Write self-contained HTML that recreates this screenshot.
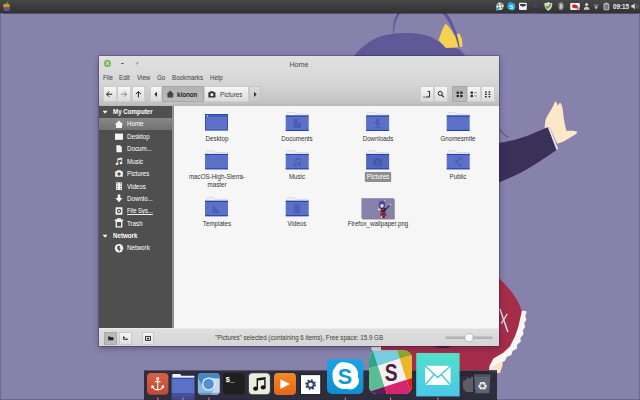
<!DOCTYPE html>
<html><head><meta charset="utf-8"><title>Home</title>
<style>
*{box-sizing:border-box;margin:0;padding:0}
html,body{width:640px;height:400px;overflow:hidden;background:#8782ab}
body{position:relative;font-family:"Liberation Sans",sans-serif;font-size:6.3px;color:#3a3a3a}
.abs{position:absolute}
#wall{position:absolute;left:0;top:0}
#panel{position:absolute;left:0;top:0;width:640px;height:13.4px;background:linear-gradient(#474747 0,#3b3b3b 55%,#313131 100%);box-shadow:0 .5px 1px rgba(30,25,50,.5)}
#win{position:absolute;left:99px;top:56px;width:400px;height:290px;background:linear-gradient(#e0e0e0 0,#d9d9d9 20px,#cfcfcf 36px,#bfbfbf 49px,#d3d3d3 49.5px,#d3d3d3 100%);box-shadow:0 2px 6px 0 rgba(30,20,60,.42),0 0 0 .6px rgba(50,45,80,.55)}
#title{position:absolute;left:0;top:3.8px;width:400px;text-align:center;font-size:7.2px;color:#4a4a4a;line-height:9px}
.menu{position:absolute;top:16.6px;line-height:9px;font-size:6.6px;color:#3c3c46;transform:scaleX(.94);transform-origin:0 50%}
.t{transform:scaleX(.94);transform-origin:0 50%;font-size:6.6px!important}
.tb{position:absolute;top:30.4px;height:16px;background:linear-gradient(#f7f7f7,#dbdbdb);border:.5px solid #cecece}
.tb.on{background:linear-gradient(#b2b2b2,#bcbcbc);border-color:#a8a8a8}
#side{position:absolute;left:0;top:49px;width:73.4px;height:223px;background:#4f4f4f;color:#fff}
.sr{position:absolute;left:27.6px;height:12.4px;line-height:12.4px;font-size:6.6px;white-space:nowrap;transform:scaleX(.94);transform-origin:0 50%}
.sh{position:absolute;left:13.6px;height:12.4px;line-height:12.4px;font-size:6.6px;font-weight:bold;white-space:nowrap;transform:scaleX(.94);transform-origin:0 50%}
#content{position:absolute;left:74px;top:49px;width:326px;height:223px;background:#f6f6f6}
.lbl{position:absolute;width:80px;text-align:center;font-size:6.6px;line-height:8.6px;color:#333;transform:scaleX(.94);transform-origin:50% 50%}
#status{position:absolute;left:0;top:272px;width:400px;height:18px;background:linear-gradient(#dfdfdf,#d5d5d5);border-top:.6px solid #ececec}
#dock{position:absolute;left:144px;top:370px;width:353px;height:30px;background:rgba(36,35,50,.9);border-top:.6px solid rgba(90,88,115,.8)}
</style></head><body>
<svg id="wall" width="640" height="400" viewBox="0 0 640 400">
<rect width="640" height="400" fill="#8782ab"/>
<!-- hair -->
<path d="M349 62 L354 55.800 C358 50.500 363 46 369 41.900 C374 38.700 380 36.300 384.700 35.200 C392 33.600 400 33 408 33 C416 33 425 34.800 431.600 37.200 C437 39.600 442 44 445.600 47.500 L458 48.600 C461 50.500 463.500 53.500 465.400 56.200 L468 80 L349 80Z" fill="#5f5998"/>
<path d="M393.500 34 C392.200 25 394.200 16 400.400 9.500 L402.800 10.500 C396.600 16.500 393.800 25 394.300 34Z" fill="#5f5998"/>
<!-- ribbon -->
<path d="M445.600 23.700 C442.600 28 440.400 34 438.600 40.300 L446 47.900 L462.400 46.900 C462.600 43 462.400 38 459.200 33.500 L453.800 34.900 C452.500 31 449.500 27 445.600 23.700Z" fill="#f6d253"/>
<path d="M438.600 9.800 C447 16.500 455 31 458.500 47.500 L459.700 47.300 C457.200 30 450.200 14.500 441.200 7.500Z" fill="#5f5998"/>
<!-- arm -->
<path d="M496 143.5 C505 142 512 140.6 520 138.2 C526 136.4 531 134.4 535 132.5 C540 130.4 544 128.8 548 127.4 L556.6 150 C550 154.6 544 158.6 538 162.5 C531 167 526 170 520 173 C512 177 505 180 496 183.5Z" fill="#3b3058"/>
<path d="M548 127.4 L549.6 126.8 L558.2 149 L556.6 150Z" fill="#e9e4ee"/>
<path d="M544.6 128 C545 123 545.5 118.5 547 116.5 C550 112 553 107 555.2 101.6 C556.5 101.5 557.2 103.5 557.5 106 C558.5 104 559.5 102.8 560.7 103.2 C562.5 106 563 110 563.2 114 C564 120 565 126 566.5 130.8 C570 131 574 130.5 577 131.8 C577.5 133.5 575 135 572 136.5 C568 139 565 141 561.5 142.2 L557.2 143.8 L549.6 126.8Z" fill="#fce8c9"/>
<path d="M498.5 127 C500.5 131.5 504 135 508.5 137.4" fill="none" stroke="#5f5998" stroke-width="1.3"/>
<!-- skirt -->
<path d="M380.500 345 L380.500 352 L400 376 L488.500 376 L489.500 366 L493.500 358.600 L503 353 L510 346.500 L515.400 335.600 L518.600 326 L522 311.500 C518.600 300 510 288 497 276.400 L490 276 L490 345Z" fill="#a62d49"/>
<path d="M371 347 L381 346.500 L381 350.800 L372 350.500Z" fill="#efeaea"/>
<path d="M522 310.400 L526.800 311.600 L525.200 316 L526.400 319.400 L524.200 323.200 L525.200 326.800 L522.800 330.400 L523.600 334 L520.400 338 L520.900 341.400 L517 344.800 L517 348.400 L512.600 351 L511.400 355 L506.800 357 L505 360.800 L501.200 363 L499.400 367 L497.600 371.600 L489 371.600 L489.500 366 L493.500 358.600 L503 353 L510 346.500 L515.400 335.600 L518.600 326Z" fill="#f9f5f3"/>
<path d="M493 366.500 L497.500 363.400 L501.500 362 L503 364 L500 373 L491.500 373Z" fill="#fbe3c4"/>
<path d="M499.800 308.800 L507.900 332" stroke="#d9e6ec" stroke-width="1.400" fill="none"/>
<path d="M507.200 314 L501.300 323.600" stroke="#d9e6ec" stroke-width="1.300" fill="none"/>
<ellipse cx="442.500" cy="346" rx="8.500" ry="1.700" fill="#2a1d3a"/>

</svg>
<div id="frame" class="abs" style="left:0;top:0;width:640px;height:400px;border:solid rgba(45,40,85,.28);border-width:0 1px 1px 1px"></div>
<div id="panel"><svg class="abs" style="left:0;top:0" width="640" height="13" viewBox="0 0 640 13">
<defs><clipPath id="ap"><path d="M6.6 4 C5.6 3.2 3.4 3.4 3.2 6 C3 8.4 4.4 10.8 5.6 10.8 C6.2 10.8 6.4 10.5 6.9 10.5 C7.4 10.5 7.6 10.8 8.2 10.8 C9.2 10.8 10.2 9 10.3 8.2 C9.2 7.8 8.9 6 10 5.2 C9.4 4 7.8 3.4 6.6 4Z M6.6 3.8 C6.5 2.8 7.4 1.8 8.4 1.7 C8.5 2.8 7.6 3.8 6.6 3.8Z"/></clipPath></defs>
<g clip-path="url(#ap)">
<rect x="2" y="1" width="10" height="4.4" fill="#63b846"/>
<rect x="2" y="5.2" width="10" height="1.2" fill="#f8b724"/>
<rect x="2" y="6.3" width="10" height="1.2" fill="#f48220"/>
<rect x="2" y="7.4" width="10" height="1.2" fill="#e03a3c"/>
<rect x="2" y="8.5" width="10" height="1.2" fill="#963d97"/>
<rect x="2" y="9.6" width="10" height="2" fill="#0a9cdb"/>
</g>
<!-- tray -->
<g transform="translate(500,6.2)">
<circle r="3.7" fill="#f0f0f0"/>
<path d="M-4 -1.6 L4 1.600 M-1.600 4 L1.600 -4 M-3.200 2.800 L3.200 -2.800 M-2.800 -3.200 L2.800 3.200" stroke="#383838" stroke-width=".7"/>
<circle r="1.300" fill="#f0f0f0"/>
<circle cx="-2.500" cy="3.100" r="1.500" fill="#33aeea"/>
</g>
<path d="M507.600 4.200 A3 3 0 0 1 511.800 2.400 A4 4 0 0 1 515.200 7.400 A3 3 0 0 1 511 10.200 A4 4 0 0 1 507.200 5.600Z" fill="#17a5e6"/>
<text x="511.300" y="8.500" font-family="Liberation Sans,sans-serif" font-size="6.200" font-weight="bold" fill="#fff" text-anchor="middle">S</text>
<rect x="519" y="2.800" width="7.800" height="7.200" rx="1" fill="#f0f0f0"/>
<path d="M520.200 4 L525.600 4 L525.600 6 L524.200 6 L522.900 7 L521.600 6 L520.200 6Z" fill="#3a3a3a"/>
<text x="535.500" y="8.200" font-family="Liberation Sans,sans-serif" font-size="5.400" font-weight="bold" fill="#45479c" text-anchor="middle">A</text>
<rect x="530.500" y="11.800" width="9.500" height=".6" fill="#4a4c88" opacity=".8"/>
<path d="M548.300 1.900 C549.700 2.900 551.100 3.100 552.300 3.100 C552.300 7 550.900 9.600 548.300 11 C545.700 9.600 544.300 7 544.300 3.100 C545.500 3.100 546.900 2.900 548.300 1.900Z" fill="#d4d8c8"/>
<path d="M546 6.200 L547.700 7.900 L550.800 4.200" stroke="#4c9a2a" stroke-width="1.500" fill="none"/>
<ellipse cx="561" cy="6.300" rx="2.700" ry="4" fill="#858585"/>
<path d="M559.800 4.600 L562.200 7.600 L561 8.800 L561 3.600 L562.200 4.800 L559.800 7.800" stroke="#f0f0f0" stroke-width=".6" fill="none"/>
<rect x="570.200" y="3" width="9.600" height="7" rx=".8" fill="#f4f4f4"/>
<circle cx="574.200" cy="6.200" r="2" fill="#d4222a"/><circle cx="576.200" cy="6.800" r="1.700" fill="#d4222a"/>
<rect x="577.400" y="7.600" width="2.400" height="2.600" fill="#5a5a5a"/><rect x="578" y="8.400" width="1.200" height="1.200" fill="#eee"/>
<circle cx="586.600" cy="4.600" r="1.600" fill="#cfcfcf"/>
<path d="M583.800 9.800 C583.800 7.400 585 6.700 586.600 6.700 C588.200 6.700 589.400 7.400 589.400 9.800Z" fill="#cfcfcf"/>
<path d="M593.300 5 C594.900 3.700 597.500 3.700 599.100 5 L596.200 9.400Z" fill="#6e6e6e"/>
<path d="M594.900 7 C595.700 6.400 596.700 6.400 597.500 7 L596.200 9.400Z" fill="#c4c4c4"/>
<rect x="604" y="3.800" width="4.800" height="6" rx=".5" fill="#777" stroke="#e0e0e0" stroke-width=".8"/>
<rect x="605.400" y="2.800" width="2" height="1" fill="#e0e0e0"/>
<text x="613" y="8.700" font-family="Liberation Sans,sans-serif" font-size="6.300" font-weight="bold" fill="#f0f0f0">09:15</text>
<path d="M631.400 5 L632.800 5 L634.800 3.200 L634.800 9.400 L632.800 7.600 L631.400 7.600Z" fill="#d8d8d8"/>
<path d="M636.200 4.600 C637 5.400 637 7.200 636.200 8" stroke="#a0a0a0" stroke-width=".7" fill="none"/>
<path d="M637.400 3.400 C638.800 5 638.800 7.600 637.400 9.200" stroke="#7a7a7a" stroke-width=".7" fill="none"/>
</svg>
</div>
<div id="win">
<!-- title bar -->
<svg class="abs" style="left:0;top:0" width="60" height="15" viewBox="0 0 60 15">
<circle cx="8.5" cy="7.4" r="3.6" fill="#80b85c"/>
<path d="M7.2 6.1 L9.8 8.7 M9.8 6.1 L7.2 8.7" stroke="#fff" stroke-width="1" />
<rect x="22" y="7" width="2.8" height=".9" fill="#555"/>
<path d="M37.2 8.4 L37.2 7.2 M38.2 6.4 L39.4 6.4" stroke="#666" stroke-width=".8"/>
<path d="M37.4 8.2 L39.2 6.6" stroke="#777" stroke-width=".5"/>
</svg>
<div id="title">Home</div>
<div class="menu" style="left:3.8px">File</div>
<div class="menu" style="left:20px">Edit</div>
<div class="menu" style="left:37.5px">View</div>
<div class="menu" style="left:57.8px">Go</div>
<div class="menu" style="left:72.8px">Bookmarks</div>
<div class="menu" style="left:111px">Help</div>
<!-- toolbar -->
<div class="tb" style="left:3.700px;width:13.900px"></div>
<div class="tb" style="left:17.600px;width:14.900px"></div>
<div class="tb" style="left:32.500px;width:13.900px"></div>
<div class="tb" style="left:51px;width:11.8px"></div>
<div class="tb on" style="left:62.8px;width:42.2px"></div>
<div class="tb" style="left:105px;width:45px"></div>
<div class="tb" style="left:150.400px;width:11.800px;background:linear-gradient(#dcdcdc,#c9c9c9);border-color:#c2c2c2"></div>
<div class="tb" style="left:321px;width:14px"></div>
<div class="tb" style="left:335px;width:14px"></div>
<div class="tb on" style="left:353.3px;width:14.6px"></div>
<div class="tb" style="left:367.9px;width:14.4px"></div>
<div class="tb" style="left:382.3px;width:14px"></div>
<svg class="abs" style="left:0;top:28px" width="400" height="20" viewBox="0 28 400 20">
<g stroke="#1c1c1c" stroke-width="1" fill="none">
<path d="M13.2 38.2 L7.6 38.2 M10.2 35.6 L7.6 38.2 L10.2 40.8"/>
<path d="M39.4 41.3 L39.4 35.6 M42 38.2 L39.4 35.6 L36.8 38.2"/>
</g>
<path d="M22 38.2 L27.8 38.2 M25.2 35.6 L27.8 38.2 L25.2 40.8" stroke="#8a8a8a" stroke-width="1" fill="none"/>
<path d="M58 35.700 L55.300 38.300 L58 40.900Z" fill="#2c2c2c"/>
<path d="M155 35.700 L157.700 38.300 L155 40.900Z" fill="#2c2c2c"/>
<!-- home icon -->
<path d="M71.3 34.6 L67.6 38.2 L68.5 38.2 L68.5 41.4 L74.1 41.4 L74.1 38.2 L75 38.2Z" fill="#444"/>
<!-- camera icon -->
<path d="M109.4 36.2 L110.8 36.2 L111.4 35.3 L114.2 35.3 L114.8 36.2 L116.4 36.2 L116.4 41.4 L109.4 41.4Z" fill="#2e2e2e"/>
<circle cx="112.9" cy="38.7" r="1.6" fill="#e9e9e9"/>
<!-- location toggle -->
<path d="M324.5 41 L325.6 41 M326.6 41 L330.6 41 L330.6 35.4 L328.6 35.4" stroke="#222" stroke-width="1" fill="none"/>
<!-- search -->
<circle cx="341.2" cy="37.4" r="2" stroke="#222" stroke-width="1" fill="none"/>
<path d="M342.7 39 L344.8 41.2" stroke="#222" stroke-width="1.1"/>
<!-- view icons -->
<g fill="#1e1e1e">
<rect x="357.6" y="35.6" width="2.3" height="2.2"/><rect x="361.2" y="35.6" width="2.3" height="2.2"/>
<rect x="357.6" y="38.9" width="2.3" height="2.2"/><rect x="361.2" y="38.9" width="2.3" height="2.2"/>
<rect x="371.6" y="35.6" width="2.3" height="2.2"/><rect x="371.6" y="38.9" width="2.3" height="2.2"/>
<rect x="386" y="35.4" width="1.7" height="1.3"/><rect x="389.6" y="35.4" width="1.7" height="1.3"/>
<rect x="386" y="37.7" width="1.7" height="1.3"/><rect x="389.6" y="37.7" width="1.7" height="1.3"/>
<rect x="386" y="40" width="1.7" height="1.3"/><rect x="389.6" y="40" width="1.7" height="1.3"/>
</g>
<g fill="#9a9a9a"><rect x="375" y="36.1" width="3" height="1.1"/><rect x="375" y="39.4" width="3" height="1.1"/></g>
</svg>
<div class="abs t" style="left:78px;top:33.9px;line-height:9px;font-weight:bold;color:#1e1e1e">kionon</div>
<div class="abs t" style="left:121px;top:33.9px;line-height:9px;color:#3c3c3c">Pictures</div>
<!-- sidebar -->

<div id="side">
<div class="abs" style="left:0;top:.8px;width:73.4px;height:200px">
<div class="abs" style="left:0;top:12.100px;width:73.400px;height:12px;background:linear-gradient(#888,#727272)"></div>

<div class="sh" style="top:0">My Computer</div>
<div class="sr" style="top:12.4px">Home</div>
<div class="sr" style="top:25.2px">Desktop</div>
<div class="sr" style="top:37.4px">Docum...</div>
<div class="sr" style="top:50.1px">Music</div>
<div class="sr" style="top:62.2px">Pictures</div>
<div class="sr" style="top:75px">Videos</div>
<div class="sr" style="top:87.4px">Downlo...</div>
<div class="sr" style="top:99.7px;transform:scaleX(.89)"><span style="border-bottom:.6px solid #eee">File Sys...</span></div>
<div class="sr" style="top:112.4px">Trash</div>
<div class="sh" style="top:124px">Network</div>
<div class="sr" style="top:136.4px">Network</div>
</div>
<svg class="abs" style="left:0;top:0" width="30" height="151" viewBox="0 -.8 30 151">
<g fill="#f4f4f4">
<path d="M3.6 4.9 L8.6 4.9 L6.1 8Z"/>
<path d="M3.6 128.9 L8.6 128.9 L6.1 132Z"/>
<!-- home -->
<path d="M20 14.8 L15.8 18.8 L17 18.8 L17 22.2 L23 22.2 L23 18.8 L24.2 18.8Z"/>
<!-- desktop -->
<rect x="16" y="27.800" width="8" height="6.200"/>
<!-- document -->
<path d="M17.4 39.4 L21 39.4 L22.8 41.2 L22.8 46.4 L17.4 46.4Z"/>
<!-- music -->
<path d="M18.4 52.6 L23.2 51.8 L23.2 57.4 A1.3 1.1 0 1 1 22.4 56.4 L22.4 53.6 L19.2 54.2 L19.2 58.2 A1.3 1.1 0 1 1 18.4 57.2Z"/>
<!-- camera -->
<path d="M16.2 65.4 L17.8 65.4 L18.4 64.4 L21.6 64.4 L22.2 65.4 L23.8 65.4 L23.8 71 L16.2 71Z"/>
<!-- videos -->
<rect x="17" y="76.6" width="6" height="7.6"/>
<!-- download -->
<path d="M18.700 88.600 L21.300 88.600 L21.300 92.200 L23.600 92.200 L20 96.400 L16.400 92.200 L18.700 92.200Z"/>
<!-- filesys -->
<rect x="16.6" y="101.4" width="6.8" height="7.6" rx=".6"/>
<!-- trash -->
<path d="M15.800 113.700 L24.200 113.700 L24.200 115.100 L15.800 115.100Z M18 112.500 L22 112.500 L22 113.800 L18 113.800Z"/>
<path d="M16.600 115 L23.400 115 L23.400 121.600 L16.600 121.600Z M17.900 116.200 L17.900 120.400 L22.100 120.400 L22.100 116.200Z" fill-rule="evenodd"/>
<!-- network -->
<circle cx="20" cy="142.400" r="4.200"/>
</g>
<g fill="#4f4f4f">
<circle cx="20" cy="68.2" r="1.7"/>
<rect x="17.8" y="77.4" width=".9" height="1.2"/><rect x="17.8" y="79.8" width=".9" height="1.2"/><rect x="17.8" y="82.2" width=".9" height="1.2"/>
<rect x="21.3" y="77.4" width=".9" height="1.2"/><rect x="21.3" y="79.8" width=".9" height="1.2"/><rect x="21.3" y="82.2" width=".9" height="1.2"/>
<circle cx="20" cy="105.2" r="2.2"/>
<path d="M19 139.6 L21.6 140.4 L20.4 142 L21.8 143.6 L20.2 145.6 L19.4 143.6 L17.8 142.6Z"/>
</g>
<circle cx="20" cy="105.2" r=".9" fill="#f4f4f4"/>
</svg>
</div>
<!-- content -->
<div id="content">
<svg class="abs" style="left:0;top:0" width="326" height="222" viewBox="0 0 326 222"><g transform="translate(32.1,9.0)"><rect x="0" y="0" width="22.8" height="16.6" fill="#2440ad"/><rect x=".9" y=".9" width="21" height="14.8" fill="#5b72c8"/><rect x=".9" y=".9" width="21" height="2.1" fill="#4a60b6"/><rect x="1.9" y="1.2" width=".9" height="1.3" fill="#e8ecfa"/></g><g transform="translate(112.7,7.1)"><path d="M1.6 3.6 L1.6 1 Q1.6 .3 2.4 .3 L8.6 .3 Q9.4 .3 9.6 1 L10 2 L22 2 Q22.7 2 22.7 2.7 L22.7 4 L1.6 4Z" fill="#f4f4f4" stroke="#c4c4c4" stroke-width=".5"/><rect x="0" y="3.4" width="23" height="15.4" rx=".6" fill="#5a71c7"/><rect x="0" y="3.4" width="23" height="1.1" fill="#2440ad"/><rect x="0" y="17.8" width="23" height="1" fill="#2440ad"/><g transform="translate(.3,0)"><path d="M7.6 7 L12.6 7 L15 9.4 L15 15.8 L7.6 15.8Z" fill="#4a5eb1"/><path d="M12.2 7.4 L12.2 9.8 L14.6 9.8" fill="#6e83d0"/></g></g><g transform="translate(193.1,7.1)"><path d="M1.6 3.6 L1.6 1 Q1.6 .3 2.4 .3 L8.6 .3 Q9.4 .3 9.6 1 L10 2 L22 2 Q22.7 2 22.7 2.7 L22.7 4 L1.6 4Z" fill="#f4f4f4" stroke="#c4c4c4" stroke-width=".5"/><rect x="0" y="3.4" width="23" height="15.4" rx=".6" fill="#5a71c7"/><rect x="0" y="3.4" width="23" height="1.1" fill="#2440ad"/><rect x="0" y="17.8" width="23" height="1" fill="#2440ad"/><g transform="translate(.3,0)"><path d="M9.8 6.8 L12.6 6.8 L12.6 10.6 L14.8 10.6 L11.2 14.6 L7.6 10.6 L9.8 10.6Z" fill="#4a5eb1"/><rect x="7.6" y="15" width="7.2" height="1" fill="#4a5eb1"/></g></g><g transform="translate(273.7,7.1)"><path d="M1.6 3.6 L1.6 1 Q1.6 .3 2.4 .3 L8.6 .3 Q9.4 .3 9.6 1 L10 2 L22 2 Q22.7 2 22.7 2.7 L22.7 4 L1.6 4Z" fill="#f4f4f4" stroke="#c4c4c4" stroke-width=".5"/><rect x="0" y="3.4" width="23" height="15.4" rx=".6" fill="#5a71c7"/><rect x="0" y="3.4" width="23" height="1.1" fill="#2440ad"/><rect x="0" y="17.8" width="23" height="1" fill="#2440ad"/><g transform="translate(.3,0)"></g></g><g transform="translate(32.0,45.5)"><path d="M1.6 3.6 L1.6 1 Q1.6 .3 2.4 .3 L8.6 .3 Q9.4 .3 9.6 1 L10 2 L22 2 Q22.7 2 22.7 2.7 L22.7 4 L1.6 4Z" fill="#f4f4f4" stroke="#c4c4c4" stroke-width=".5"/><rect x="0" y="3.4" width="23" height="15.4" rx=".6" fill="#5a71c7"/><rect x="0" y="3.4" width="23" height="1.1" fill="#2440ad"/><rect x="0" y="17.8" width="23" height="1" fill="#2440ad"/><g transform="translate(.3,0)"></g></g><g transform="translate(112.7,45.5)"><path d="M1.6 3.6 L1.6 1 Q1.6 .3 2.4 .3 L8.6 .3 Q9.4 .3 9.6 1 L10 2 L22 2 Q22.7 2 22.7 2.7 L22.7 4 L1.6 4Z" fill="#f4f4f4" stroke="#c4c4c4" stroke-width=".5"/><rect x="0" y="3.4" width="23" height="15.4" rx=".6" fill="#5a71c7"/><rect x="0" y="3.4" width="23" height="1.1" fill="#2440ad"/><rect x="0" y="17.8" width="23" height="1" fill="#2440ad"/><g transform="translate(.3,0)"><path d="M9.4 8 L14.6 7 L14.6 13.8 A1.6 1.4 0 1 1 13.6 12.5 L13.6 9 L10.4 9.7 L10.4 14.8 A1.6 1.4 0 1 1 9.4 13.5Z" fill="#4a5eb1"/></g></g><g transform="translate(193.1,45.5)"><path d="M1.6 3.6 L1.6 1 Q1.6 .3 2.4 .3 L8.6 .3 Q9.4 .3 9.6 1 L10 2 L22 2 Q22.7 2 22.7 2.7 L22.7 4 L1.6 4Z" fill="#f4f4f4" stroke="#c4c4c4" stroke-width=".5"/><rect x="0" y="3.4" width="23" height="15.4" rx=".6" fill="#5068bd"/><rect x="0" y="3.4" width="23" height="1.1" fill="#2440ad"/><rect x="0" y="17.8" width="23" height="1" fill="#2440ad"/><g transform="translate(.3,0)"><path d="M7 8.8 L9 8.8 L9.8 7.6 L12.8 7.6 L13.6 8.8 L15.4 8.8 L15.4 15 L7 15Z" fill="#4458a6"/><circle cx="11.2" cy="11.8" r="1.9" fill="#5068bd"/><circle cx="11.2" cy="11.8" r="1" fill="#4458a6"/></g></g><g transform="translate(273.7,45.5)"><path d="M1.6 3.6 L1.6 1 Q1.6 .3 2.4 .3 L8.6 .3 Q9.4 .3 9.6 1 L10 2 L22 2 Q22.7 2 22.7 2.7 L22.7 4 L1.6 4Z" fill="#f4f4f4" stroke="#c4c4c4" stroke-width=".5"/><rect x="0" y="3.4" width="23" height="15.4" rx=".6" fill="#5a71c7"/><rect x="0" y="3.4" width="23" height="1.1" fill="#2440ad"/><rect x="0" y="17.8" width="23" height="1" fill="#2440ad"/><g transform="translate(.3,0)"><circle cx="13.4" cy="8" r="1.3" fill="#4a5eb1"/><circle cx="9.2" cy="11.2" r="1.3" fill="#4a5eb1"/><circle cx="13.4" cy="14.6" r="1.3" fill="#4a5eb1"/><path d="M13.4 8 L9.2 11.2 L13.4 14.6" stroke="#4a5eb1" stroke-width=".9" fill="none"/></g></g><g transform="translate(32.0,92.4)"><path d="M1.6 3.6 L1.6 1 Q1.6 .3 2.4 .3 L8.6 .3 Q9.4 .3 9.6 1 L10 2 L22 2 Q22.7 2 22.7 2.7 L22.7 4 L1.6 4Z" fill="#f4f4f4" stroke="#c4c4c4" stroke-width=".5"/><rect x="0" y="3.4" width="23" height="15.4" rx=".6" fill="#5a71c7"/><rect x="0" y="3.4" width="23" height="1.1" fill="#2440ad"/><rect x="0" y="17.8" width="23" height="1" fill="#2440ad"/><g transform="translate(.3,0)"><path d="M7.4 7.6 L7.4 15.6 L15.2 15.6Z" fill="#4a5eb1"/></g></g><g transform="translate(112.7,92.4)"><path d="M1.6 3.6 L1.6 1 Q1.6 .3 2.4 .3 L8.6 .3 Q9.4 .3 9.6 1 L10 2 L22 2 Q22.7 2 22.7 2.7 L22.7 4 L1.6 4Z" fill="#f4f4f4" stroke="#c4c4c4" stroke-width=".5"/><rect x="0" y="3.4" width="23" height="15.4" rx=".6" fill="#5a71c7"/><rect x="0" y="3.4" width="23" height="1.1" fill="#2440ad"/><rect x="0" y="17.8" width="23" height="1" fill="#2440ad"/><g transform="translate(.3,0)"><rect x="8.2" y="7" width="6" height="9" fill="#4a5eb1"/><g fill="#5a71c7"><rect x="8.8" y="7.8" width=".9" height="1.2"/><rect x="8.8" y="10" width=".9" height="1.2"/><rect x="8.8" y="12.2" width=".9" height="1.2"/><rect x="8.8" y="14.4" width=".9" height="1.2"/><rect x="12.7" y="7.8" width=".9" height="1.2"/><rect x="12.7" y="10" width=".9" height="1.2"/><rect x="12.7" y="12.2" width=".9" height="1.2"/><rect x="12.7" y="14.4" width=".9" height="1.2"/></g></g></g><g transform="translate(188.4,93.2)"><rect x=".9" y="1" width="32.4" height="20.2" fill="#4a4a4a" opacity=".7"/><rect x="0" y="0" width="32.4" height="20.2" fill="#8782ab"/><path d="M17.4 6.4 C17.2 3.6 19 2.6 20.6 2.6 C22.6 2.6 24 4 23.8 6.6 C23.6 8.4 23 9.2 22.4 9.8 L18.4 9.8 C17.8 9 17.5 8 17.4 6.4Z" fill="#4a45a3"/><path d="M19 6 L22.2 6.4 L21.8 9.6 L19.6 9.8Z" fill="#f6e4cf"/><path d="M22.4 2.6 L23.6 1.6 L24 3Z" fill="#f6d253"/><path d="M19 9.6 L22.6 9.4 L24.4 10 L28 6.6 L28.6 7.4 L24.6 11.8 L23.6 14.4 L19.6 14.4 L19.2 11.6Z" fill="#2c2850"/><path d="M28 6.6 L29.2 5.4 L29.6 6.4 L28.6 7.4Z" fill="#f6e4cf"/><path d="M16.4 10.2 L19.2 11 L19.2 12.4 L16.8 11.8Z" fill="#f6e4cf"/><ellipse cx="21.4" cy="11.2" rx="1.2" ry=".8" fill="#c8283c"/><path d="M19.2 14 L24 14 L25.6 17.4 C23.6 18.8 20.6 18.8 18.6 17.2Z" fill="#b0283f"/><path d="M20.4 15 L23.4 15 L23.6 16.4 L20.4 16.4Z" fill="#2c2850"/><rect x="21.6" y="18.2" width="1.6" height="1.6" fill="#1d1a2a"/><rect x="19.6" y="18.2" width="1" height="1.2" fill="#f0ece8"/></g></svg><div class="lbl" style="left:3.5px;top:29.7px">Desktop</div><div class="lbl" style="left:84.2px;top:29.7px">Documents</div><div class="lbl" style="left:164.6px;top:29.7px">Downloads</div><div class="lbl" style="left:245.2px;top:29.7px">Gnomesmite</div><div class="lbl" style="left:3.5px;top:67.7px">macOS-High-Sierra-<br>master</div><div class="lbl" style="left:84.2px;top:67.7px">Music</div><div class="lbl" style="left:164.6px;top:67.7px"><span style="background:#8e8e8e;color:#fff;padding:.9px 1.8px 2.3px;border-radius:1px">Pictures</span></div><div class="lbl" style="left:245.2px;top:67.7px">Public</div><div class="lbl" style="left:3.5px;top:114.7px">Templates</div><div class="lbl" style="left:84.2px;top:114.7px">Videos</div><div class="lbl" style="left:164.6px;top:114.7px">Firefox_wallpaper.png</div>
</div>
<div class="abs" style="left:72.800px;top:49px;width:2.200px;height:223px;background:#8e8e8e"></div>
<div id="sep" class="abs" style="left:0;top:48px;width:400px;height:2px;background:linear-gradient(#c2c2c2,#b4b4b4)"></div>
<!-- status bar -->
<div id="status">
<div class="abs" style="left:5.4px;top:2.6px;width:12.8px;height:13.4px;background:#b9b9b9;border:.5px solid #aaa"></div>
<div class="abs" style="left:20.4px;top:2.6px;width:12.6px;height:13.4px;background:linear-gradient(#f5f5f5,#e0e0e0);border:.5px solid #c9c9c9"></div>
<div class="abs" style="left:43.2px;top:2.6px;width:11.6px;height:13.4px;background:linear-gradient(#f5f5f5,#e0e0e0);border:.5px solid #c9c9c9"></div>
<svg class="abs" style="left:0;top:0" width="400" height="18" viewBox="0 0 400 18">
<path d="M9.2 7.6 L11 7.6 L11.6 8.3 L14.4 8.3 L14.4 11.2 L9.2 11.2Z" fill="#222"/>
<path d="M24.6 7.4 L24.6 10.4 L26.6 10.4 M24.6 8.6 L26.2 8.6" stroke="#222" stroke-width=".9" fill="none"/>
<rect x="26.6" y="9.6" width="2" height="1.4" fill="#222"/>
<rect x="46.6" y="7.4" width="4.8" height="4" fill="none" stroke="#222" stroke-width=".9"/>
<rect x="48" y="8.8" width="2" height="1.6" fill="#222"/>
<rect x="346.500" y="7.900" width="47" height="1.600" rx=".8" fill="#c6c6c6" stroke="#8c8c8c" stroke-width=".5"/>
<circle cx="370" cy="8.700" r="4.100" fill="#f8f8f8" stroke="#9c9c9c" stroke-width=".6"/>
</svg>
<div class="abs t" style="left:115.8px;top:4.4px;line-height:9px;color:#3c3c3c;white-space:nowrap">"Pictures" selected (containing 6 items), Free space: 15.9 GB</div>
</div>

</div>
<div id="dock"></div>
<svg class="abs" style="left:140px;top:345px" width="370" height="55" viewBox="140 345 370 55">
<defs>
<linearGradient id="ga" x1="0" y1="0" x2="0" y2="1"><stop offset="0" stop-color="#d56048"/><stop offset="1" stop-color="#c04935"/></linearGradient>
<linearGradient id="gp" x1="0" y1="0" x2="0" y2="1"><stop offset="0" stop-color="#f08a24"/><stop offset="1" stop-color="#e8651a"/></linearGradient>
<linearGradient id="gm" x1="0" y1="0" x2="0" y2="1"><stop offset="0" stop-color="#52e0c9"/><stop offset="1" stop-color="#4ac8ea"/></linearGradient>
<linearGradient id="gs" x1="0" y1="0" x2="0" y2="1"><stop offset="0" stop-color="#1aa4e4"/><stop offset="1" stop-color="#0d8fd0"/></linearGradient>
<linearGradient id="gf" x1="0" y1="0" x2="0" y2="1"><stop offset="0" stop-color="#4656a2"/><stop offset="1" stop-color="#3a4585"/></linearGradient>
<clipPath id="slk"><rect x="369" y="350.5" width="43" height="43.5" rx="8"/></clipPath>
</defs>
<!-- anchor -->
<rect x="147" y="373" width="21.4" height="21.8" rx="4" fill="url(#ga)"/>
<g stroke="#fff" stroke-width="1.100" fill="none" stroke-linecap="round">
<circle cx="157.700" cy="378.600" r="1.100"/>
<path d="M157.700 379.800 L157.700 389.800 M155.200 381.800 L160.200 381.800 M152.200 386.200 C152.900 388.800 155 389.900 157.700 389.900 C160.400 389.900 162.500 388.800 163.200 386.200 M151.800 387.600 L152.200 385.800 L153.600 386.800 M163.600 387.600 L163.200 385.800 L161.800 386.800"/>
</g>
<!-- folder -->
<rect x="181" y="375.100" width="13" height="1.400" fill="#1c2a78"/>
<path d="M172.300 378.200 L172.300 375 Q172.300 374.100 173.200 374.100 L180.300 374.100 L181.300 375.700 L193.600 375.700 Q194.400 375.700 194.400 376.500 L194.400 378.200Z" fill="#f4f4fa"/>
<rect x="171.600" y="377.800" width="23" height="15.600" fill="#5a71c7"/>
<rect x="171.600" y="377.800" width="23" height="1" fill="#2440ad"/>
<rect x="171.600" y="393.400" width="23" height="6.600" fill="url(#gf)"/>
<!-- chromium -->
<clipPath id="chr"><rect x="197.800" y="373" width="21.800" height="21.800" rx="3.600"/></clipPath>
<g clip-path="url(#chr)">
<rect x="197" y="372" width="24" height="24" fill="#8db7de"/>
<path d="M197 372 L221 372 L221 378.600 L208.600 378.600 L203.400 387.400 L197 376.500Z" fill="#4a86c2"/>
<path d="M208.600 378.600 L221 378.600 L221 396 L210.400 396 L214.600 387.600Z" fill="#c6dcee"/>
<rect x="197" y="392.800" width="24" height="3" fill="#3f7ab8" opacity=".55"/>
<circle cx="208.600" cy="384" r="6.600" fill="#e6f0f9"/>
<circle cx="208.600" cy="384" r="5.300" fill="#5190d3"/>
</g>
<!-- terminal -->
<rect x="223" y="373" width="22" height="21.6" rx="3.6" fill="#1f1f1f"/>
<text x="225.400" y="381.800" font-family="Liberation Mono,monospace" font-size="7.600" font-weight="bold" fill="#fff">$_</text>
<!-- music -->
<rect x="248.4" y="372.8" width="22" height="22" rx="4" fill="#ecebe0" stroke="#222" stroke-width=".8"/>
<path d="M256.600 378.300 L265.600 377 L265.600 379.400 L256.600 380.700Z M256.600 378.300 L258 378.300 L258 388.600 L256.600 388.600Z M264.200 377.200 L265.600 377.200 L265.600 387.400 L264.200 387.400Z" fill="#151515"/>
<ellipse cx="255.600" cy="388.700" rx="2.500" ry="2.100" fill="#151515"/><ellipse cx="263.200" cy="387.400" rx="2.500" ry="2.100" fill="#151515"/>
<!-- play -->
<rect x="274" y="373" width="22" height="22" rx="4" fill="url(#gp)"/>
<path d="M280.400 379.200 L289.900 384.100 L280.400 389Z" fill="#fff"/>
<!-- settings -->
<rect x="300.4" y="374.6" width="20.4" height="20" fill="#fdfdfd" stroke="#16161e" stroke-width="1"/>
<circle cx="310.6" cy="384.6" r="3.2" fill="none" stroke="#2f3f63" stroke-width="2"/>
<circle cx="310.6" cy="384.6" r="4.6" fill="none" stroke="#2f3f63" stroke-width="1.6" stroke-dasharray="1.8 1.8"/>
<!-- skype -->
<rect x="327" y="359" width="36.4" height="35" rx="5" fill="url(#gs)"/>
<g transform="translate(345.300,375.800) scale(1.240) translate(-345.400,-375.900)"><path d="M337 369.400 A7 7 0 0 1 346.400 365.400 A9.600 9.600 0 0 1 355.600 376.800 A7 7 0 0 1 346.800 386.400 A9.600 9.600 0 0 1 335.200 375.600 A7 7 0 0 1 337 369.400Z" fill="#fff"/></g>
<text x="345" y="383.700" font-family="Liberation Sans,sans-serif" font-size="21.500" font-weight="bold" fill="#1099da" text-anchor="middle">S</text>
<!-- slack -->
<g clip-path="url(#slk)">
<rect x="369" y="350" width="44" height="45" fill="#f2efe9"/>
<g transform="translate(1.5,0.6) rotate(-17.500 391.500 373)">
<rect x="360" y="340" width="19.5" height="21" fill="#2fa58c"/>
<rect x="379.5" y="340" width="23" height="21" fill="#79cce0"/>
<rect x="402.5" y="340" width="22" height="21" fill="#8aa52c"/>
<rect x="360" y="361" width="19.5" height="22" fill="#5bbd93"/>
<rect x="379.500" y="361" width="23" height="22" fill="#f4f1ec"/>
<rect x="402.5" y="361" width="22" height="22" fill="#eeb42a"/>
<rect x="360" y="383" width="19.5" height="24" fill="#5a1f55"/>
<rect x="379.5" y="383" width="23" height="24" fill="#d7246e"/>
<rect x="402.5" y="383" width="22" height="24" fill="#e02020"/>
</g>
</g>
<text transform="translate(391.200,380.600) scale(.800,1)" x="0" y="0" font-family="Liberation Sans,sans-serif" font-size="24" font-weight="bold" fill="#4d1c4a" text-anchor="middle">S</text>
<!-- mail -->
<rect x="416.2" y="353" width="43.4" height="43.4" fill="url(#gm)"/>
<path d="M425 365.800 L450.600 365.800 L450.600 385 L425 385Z" fill="#fff"/>
<path d="M425 365.800 L437.800 377.600 L450.600 365.800 M425 385 L434.200 374.400 M450.600 385 L441.400 374.400" stroke="#46cdd8" stroke-width="1.5" fill="none"/>
<!-- trash -->
<path d="M463 388 L463 381 L466 380 L467 377.6 L470 379 L471.6 376.6 L473 377 L473 392 L466 392Z" fill="#6a6a70" opacity=".8"/>
<path d="M474.200 375.200 L490.400 375.200 L489.200 393.200 L475.400 393.200Z" fill="#5d6472"/>
<rect x="474" y="374.200" width="16.600" height="2.600" fill="#4a505d"/>
<text x="482.300" y="389.600" font-family="DejaVu Sans,sans-serif" font-size="11.500" font-weight="bold" fill="#fafafa" text-anchor="middle">♻</text>
<!-- indicators -->
<g fill="#e07488">
<rect x="157.3" y="397.400" width="1.100" height="2.600"/><rect x="182.4" y="397.400" width="1.100" height="2.600"/><rect x="208.4" y="397.400" width="1.100" height="2.600"/>
<rect x="344.8" y="397.400" width="1.100" height="2.600"/><rect x="390" y="397.400" width="1.100" height="2.600"/><rect x="437.4" y="397.400" width="1.100" height="2.600"/>
</g>
</svg>

</body></html>
